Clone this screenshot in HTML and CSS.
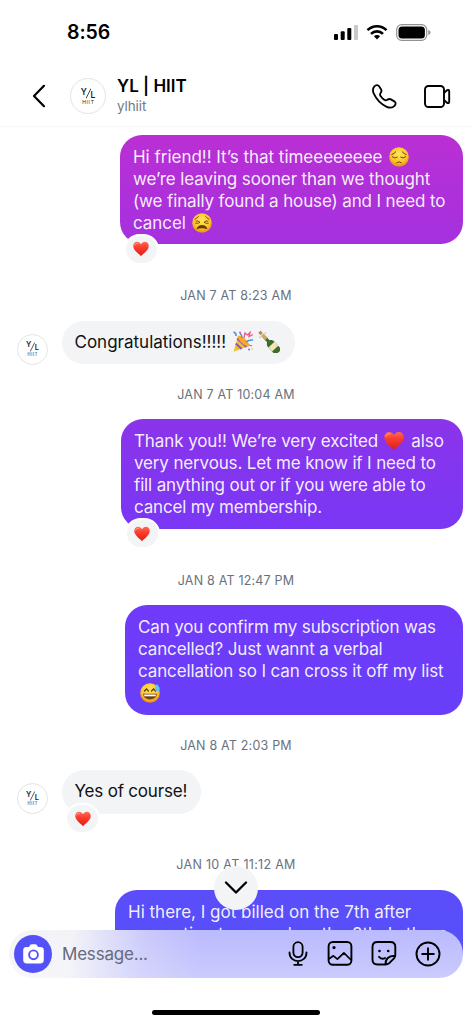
FILE: index.html
```html
<!DOCTYPE html>
<html lang="en">
<head>
<meta charset="utf-8">
<title>YL | HIIT</title>
<link rel="stylesheet" href="styles.css">
</head>
<body>
<svg class="defs" width="0" height="0" aria-hidden="true">
  <defs>
    <radialGradient id="face" cx=".5" cy=".35" r=".65"><stop offset="0" stop-color="#ffe65c"/><stop offset=".65" stop-color="#fcc52b"/><stop offset="1" stop-color="#e98a12"/></radialGradient>
    <linearGradient id="red" x1="0" y1="0" x2="0" y2="1"><stop offset="0" stop-color="#ff6a55"/><stop offset=".4" stop-color="#fb3c2d"/><stop offset="1" stop-color="#dc1e18"/></linearGradient>
    <symbol id="heart" viewBox="0 0 20 20"><path fill="url(#red)" d="M10 19C8.7 16.8.3 12 .3 6.2.3 3.1 2.4 1 5 1c2.200 0 4 1.100 5 3.100C11 2.100 12.800 1 15 1c2.600 0 4.700 2.100 4.700 5.200C19.700 12 11.300 16.800 10 19z"/><path d="M2 5.200C2.500 3.200 4.300 2.400 6 2.900" fill="none" stroke="#ffa694" stroke-width="1" stroke-linecap="round"/></symbol>
  </defs>
</svg>
<div class="phone">
  <div class="status">
    <span class="clock">8:56</span>
    <span class="indicators">
      <svg width="24" height="16" viewBox="0 0 24 16"><rect x="0" y="10" width="4" height="6" rx="1"/><rect x="6.700" y="7.300" width="4" height="8.700" rx="1"/><rect x="13.300" y="4" width="4" height="12" rx="1"/><rect x="20" y="1" width="4" height="15" rx="1" fill="#c8c8c8"/></svg>
      <svg width="22" height="16" viewBox="0 0 22 16" fill="none" stroke="#000" stroke-width="2.600"><path d="M1.500 6.200a13.500 13.500 0 0 1 19 0"/><path d="M5 9.900a8.500 8.500 0 0 1 12 0"/><path d="M7.900 12.300a4.400 4.400 0 0 1 6.200 0L11 15.600z" fill="#000" stroke="none"/></svg>
      <svg width="35" height="17" viewBox="0 0 35 17"><rect x=".7" y=".7" width="30" height="15.600" rx="5" fill="none" stroke="#929292" stroke-width="1.200"/><rect x="2.500" y="2.500" width="26.400" height="12" rx="3.500"/><path d="M32.300 5.700q2.200 1 2.200 2.800t-2.200 2.800z" fill="#929292"/></svg>
    </span>
  </div>
  <header class="header">
    <svg class="back" width="14" height="24" viewBox="0 0 14 24" fill="none" stroke="#000" stroke-width="2.200" stroke-linecap="round" stroke-linejoin="round"><path d="M12 1.800 2 12l10 10.200"/></svg>
    <div class="avatar avatar-lg"><span class="mono"><b>Y</b><svg width="5" height="11" viewBox="0 0 5 11"><path d="M5 .5 0 10.500" stroke="#333" stroke-width=".9"/></svg><b class="low">L</b></span><span class="sub">HIIT</span></div>
    <div class="who"><div class="name">YL | HIIT</div><div class="handle">ylhiit</div></div>
    <svg class="call" width="25" height="25" viewBox="0 0 25 25" fill="none" stroke="#000" stroke-width="1.800" stroke-linejoin="round"><path d="M2.400 2.400C4 .7 6 .7 7.100 2.300l2 3.200c.8 1.400.5 2.300-.5 3.500-.9 1.100-.8 2 0 3.100 1 1.500 2.200 2.700 3.600 3.700 1.200.9 2 .8 3.100 0 1.200-.9 2.100-1.200 3.600-.4l3.400 2c1.800 1.100 1.700 2.900.2 4.500-1.800 2-4.800 2.200-7.800.9C9.300 20.400 4.300 15.200 1.800 9.700.6 7 .7 4.300 2.400 2.400z"/></svg>
    <svg class="video" width="27" height="23" viewBox="0 0 27 23" fill="none" stroke="#000" stroke-width="1.900" stroke-linejoin="round"><rect x="1" y="1" width="19" height="21" rx="3.500"/><path d="M20 8.200 22.500 5.600Q25.200 3.800 25.200 6.500v10q0 2.700-2.700 .9L20 14.800"/></svg>
  </header>

  <main class="thread">
    <section class="sent s1">
      <p><span class="l a1">Hi friend!! It’s that timeeeeeeee</span><svg class="emo" viewBox="0 0 20 20"><circle cx="10" cy="10" r="9.800" fill="url(#face)"/><path d="M2.800 7.500Q5 7 6.800 4.800M17.200 7.500Q15 7 13.200 4.800M3.300 9.800q2.500 2.300 5 .4M16.700 9.800q-2.500 2.300-5 .4M7.600 15.700q2.400-2 4.800 0" fill="none" stroke="#74400b" stroke-width="1" stroke-linecap="round"/></svg></p>
      <p><span class="l a2">we’re leaving sooner than we thought</span></p>
      <p><span class="l a3">(we finally found a house) and I need to</span></p>
      <p><span class="l a4">cancel</span><svg class="emo" viewBox="0 0 20 20"><circle cx="10" cy="10" r="9.800" fill="url(#face)"/><path d="M3 6.200Q5 5.200 6.500 3.400M17 6.200Q15 5.200 13.500 3.400M4 8q2.300-.5 4 1.300-2 1.500-4.300 1M16 8q-2.300-.5-4 1.300 2 1.500 4.300 1" fill="none" stroke="#74400b" stroke-width=".9" stroke-linecap="round"/><path d="M4.700 16.300C5.500 10.700 14.500 10.700 15.300 16.300Q10 14 4.700 16.300z" fill="#6b3a10"/></svg></p>
      <span class="react"><svg viewBox="0 0 20 20"><use href="#heart"/></svg></span>
    </section>
    <time class="t1">JAN 7 AT 8:23 AM</time>
    <section class="received">
      <div class="avatar"><span class="mono"><b>Y</b><svg width="5" height="10" viewBox="0 0 5 11"><path d="M5 .5 0 10.500" stroke="#333" stroke-width=".9"/></svg><b class="low">L</b></span><span class="sub">HIIT</span></div>
      <div class="bubble r1"><span class="l b1">Congratulations!!!!!</span>
        <svg class="party" viewBox="0 0 22 22"><path d="M6 5 17 15 1.500 20.700z" fill="#f8bd28"/><path d="M5.200 7.500 14.500 16M3.800 12.500 9.600 18" stroke="#8a55cf" stroke-width="2"/><ellipse cx="11.500" cy="10" rx="2.700" ry="7.500" transform="rotate(-47 11.500 10)" fill="#f7a928"/><path d="M1.500 1q3 1 2.500 4M10 7q0-3-2-5M14 11q3-2.500 7-2" fill="none" stroke="#4b8eeb" stroke-width="1.500"/><path d="m12 7 1-5 2.500 2L18 1.500l-1 4 4-2M17 14l3 1" fill="none" stroke="#f25783" stroke-width="1.300"/><circle cx="8" cy="1.500" r="1" fill="#f25783"/><circle cx="17" cy="18.500" r="1" fill="#8a62dc"/><circle cx="20" cy="18" r=".8" fill="#f8bd28"/></svg>
        <svg class="bottle" viewBox="0 0 22 22"><g transform="rotate(-43 11 11)"><path d="M9.400 4h3.200v6c2 1.200 2.600 2.500 2.600 4.500v9q0 1.500-1.500 1.500H8.300q-1.500 0-1.500-1.500v-9c0-2 .6-3.300 2.600-4.500z" fill="#3f6b2d"/><path d="M9.200 1h3.600v6H9.200z" fill="#c9aa62"/><path d="M9.400-3h3.200v3.200H9.400z" fill="#b58b5a"/><path d="M6.800 14.500h8.400v5.500H6.800z" fill="#efe5b6"/></g><path d="M1 5.500 3 7M6.500 1.500 8 3" stroke="#d9cdb0" stroke-width="1.500"/></svg>
      </div>
    </section>
    <time class="t2">JAN 7 AT 10:04 AM</time>
    <section class="sent s2">
      <p><span class="l c1">Thank you!! We’re very excited</span><svg class="emo" viewBox="0 0 20 20"><use href="#heart"/></svg><span class="l c1b">also</span></p>
      <p><span class="l c2">very nervous. Let me know if I need to</span></p>
      <p><span class="l c3">fill anything out or if you were able to</span></p>
      <p><span class="l c4">cancel my membership.</span></p>
      <span class="react"><svg viewBox="0 0 20 20"><use href="#heart"/></svg></span>
    </section>
    <time class="t3">JAN 8 AT 12:47 PM</time>
    <section class="sent s3">
      <p><span class="l d1">Can you confirm my subscription was</span></p>
      <p><span class="l d2">cancelled? Just wannt a verbal</span></p>
      <p><span class="l d3">cancellation so I can cross it off my list</span></p>
      <p><svg class="emo first" viewBox="0 0 20 20"><circle cx="10" cy="10" r="9.800" fill="url(#face)"/><path d="m4.500 8 2-2 2 2M11.500 8l2-2 2 2" fill="none" stroke="#653a10" stroke-width="1.300" stroke-linecap="round"/><path d="M3.200 10.800h13.600c0 7.500-13.600 7.500-13.600 0z" fill="#74400f"/><path d="M4.200 11.500h11.600v1.800H4.200z" fill="#fff"/><path d="M17 .8c1.500 2.200 2.700 3.500 2.700 5.200 0 3-4.700 3-4.700 0 0-1.700 1.200-3 2-5.200z" fill="#5ec5f4"/></svg></p>
    </section>
    <time class="t4">JAN 8 AT 2:03 PM</time>
    <section class="received">
      <div class="avatar"><span class="mono"><b>Y</b><svg width="5" height="10" viewBox="0 0 5 11"><path d="M5 .5 0 10.500" stroke="#333" stroke-width=".9"/></svg><b class="low">L</b></span><span class="sub">HIIT</span></div>
      <div class="bubble r2"><span class="l e1">Yes of course!</span><span class="react"><svg viewBox="0 0 20 20"><use href="#heart"/></svg></span></div>
    </section>
    <time class="t5">JAN 10 AT 11:12 AM</time>
    <section class="sent s4">
      <p><span class="l f1">Hi there, I got billed on the 7th after</span></p>
      <p><span class="l f2">requesting to cancel on the 8th. Is there</span></p>
    </section>
  </main>

  <div class="down"><svg width="24" height="14" viewBox="0 0 24 14" fill="none" stroke="#000" stroke-width="2.300" stroke-linecap="round" stroke-linejoin="round"><path d="m2 1.500 10 10 10-10"/></svg></div>
  <footer class="composer">
    <div class="camera"><svg width="21" height="20" viewBox="0 0 21 20"><path fill="#fff" d="M6.800 1.500Q7.500.2 9 .2h3q1.500 0 2.200 1.300l.5 1q.3.500 1 .5h1.500Q20.800 3 20.800 6.300v9.400q0 3.800-3.600 3.800H3.800Q.2 19.500.2 15.700V6.300Q.2 3 3.800 3h1.500q.7 0 1-.5z"/><circle cx="10.500" cy="10.800" r="4.400" fill="none" stroke="#5551f8" stroke-width="1.900"/></svg></div>
    <span class="placeholder">Message...</span>
    <svg class="mic" width="20" height="25" viewBox="0 0 20 25" fill="none" stroke="#000" stroke-width="1.800" stroke-linecap="round"><rect x="5.400" y="1.200" width="9.200" height="15" rx="4.600"/><path d="M1.500 11.500c0 11.400 17 11.400 17 0M10 20.200v3.500M6.200 23.800h7.600"/></svg>
    <svg class="pic" width="26" height="25" viewBox="0 0 26 25" fill="none" stroke="#000" stroke-width="1.900" stroke-linejoin="round"><rect x="1.600" y="1" width="22.800" height="22.800" rx="4.200"/><path d="m1.800 18 4.600-3.200 4 3.300 6.500-6.300 7.200 7.200" stroke-width="1.700"/><circle cx="7" cy="6.600" r="1.600" fill="#000" stroke="none"/></svg>
    <svg class="sticker" width="26" height="25" viewBox="0 0 26 25" fill="none" stroke="#000" stroke-width="1.900" stroke-linejoin="round" stroke-linecap="round"><path d="M14.500 23.500H6.500q-5 0-5-5V6q0-5 5-5h12.800q5 0 5 5v8q0 2-1.300 3.300l-5 5q-1.400 1.200-3.500 1.200zM14.500 23.500c-.2-5.500 3-9 9.500-8.800M8 15.800q3 3 6 1.200"/><circle cx="8.500" cy="10" r="1.300" fill="#000" stroke="none"/><circle cx="17.200" cy="10" r="1.300" fill="#000" stroke="none"/></svg>
    <svg class="plus" width="26" height="26" viewBox="0 0 26 26" fill="none" stroke="#000" stroke-width="1.900" stroke-linecap="round"><circle cx="13" cy="13" r="11.500"/><path d="M13 7.200v11.600M7.200 13h11.600"/></svg>
  </footer>
  <div class="home"></div>
</div>
</body>
</html>
```
FILE: styles.css
```css
* { box-sizing: border-box; }
body { margin: 0; background: #fff; font-family: Inter, "Liberation Sans", sans-serif; color: #101114; }
p { margin: 0; }
svg { display: block; flex: none; }
.defs { position: absolute; }
.phone { position: relative; width: 472px; height: 1024px; overflow: hidden; display: flex; flex-direction: column; }
.status { height: 64px; flex: none; display: flex; align-items: center; justify-content: space-between; padding: 0 42px 0 67px; }
.clock { font-size: 19.500px; font-weight: 600; letter-spacing: -.1px; color: #000; }
.indicators { display: flex; align-items: center; gap: 8px; padding-right: -1px; margin-right: -1px; }
.header { height: 63px; flex: none; display: flex; align-items: center; border-bottom: 1px solid #f7f7f8; padding: 2px 0 0 32px; }
.back { margin-right: 24px; }
.avatar { width: 31px; height: 31px; flex: none; border: 1px solid #e3e4e6; border-radius: 50%; background: #fff; display: flex; flex-direction: column; align-items: center; justify-content: center; gap: 1px; color: #222; }
.mono { display: flex; align-items: center; height: 10px; font-size: 7.500px; line-height: 8px; }
.mono svg { margin: 0 -.5px 0 -1px; }
.mono b { font-weight: 600; margin-top: -3px; }
.mono b.low { margin-top: 3px; }
.sub { font-size: 4.200px; line-height: 4px; letter-spacing: .7px; margin-right: -.7px; }
.avatar-lg { width: 36px; height: 36px; }
.avatar-lg .mono { font-size: 8.500px; height: 11px; }
.avatar-lg .sub { font-size: 5px; line-height: 5px; }
.who { margin-left: 11px; width: 255px; }
.name { font-size: 17px; line-height: 20px; font-weight: 600; color: #000; }
.handle { font-size: 13.500px; line-height: 20px; color: #727a85; letter-spacing: -.1px; }
.video { margin-left: 27px; }
.thread { height: 827px; flex: none; overflow: hidden; padding: 8px 9px 0 17px; display: flex; flex-direction: column; }
.sent { position: relative; align-self: flex-end; flex: none; height: 109.500px; border-radius: 22px; padding: 11px 13px; color: rgba(255,255,255,.93); }
.sent p { display: flex; align-items: center; height: 22px; }
.l { font-size: 17px; line-height: 22px; white-space: nowrap; flex: none; }
.s1 { width: 343px; height: 109px; background: linear-gradient(#ba2fd4, #a431df); }
.s2 { width: 342px; background: linear-gradient(#8b34ea, #7937f5); }
.s3 { width: 338px; background: linear-gradient(#703afa, #683ff9); }
.s4 { width: 348px; background: linear-gradient(#5c4dfa, #4f52fb); }
.a1 { letter-spacing: -.02px; }
.a2 { letter-spacing: -.11px; }
.a3, .d2, .d3 { letter-spacing: -.13px; }
.a4 { letter-spacing: -.05px; }
.c1 { letter-spacing: -.1px; }
.c2, .c3, .d1 { letter-spacing: -.15px; }
.c4, .e1 { letter-spacing: -.19px; }
.emo { width: 20px; height: 20px; margin: -1px 7px 0 6px; }
.emo.first { margin-left: 2px; }
.react { position: absolute; left: 3.500px; top: 98.800px; width: 35px; height: 31px; border: 2px solid #fff; border-radius: 16px; background: #f3f4f6; display: flex; align-items: center; justify-content: center; }
.react svg { width: 16px; height: 16px; }
time { flex: none; align-self: center; height: 18px; line-height: 18px; font-size: 12.500px; letter-spacing: .2px; color: #6a717c; white-space: nowrap; }
.thread time { margin-right: 8px; }
.t1 { margin: 42.500px 0 16.500px; }
.t2 { margin: 22px 0 15.300px; }
.t3 { margin: 43.200px 0 15.300px; }
.t4 { margin: 22.500px 0 15px; }
.t5 { margin: 42.500px 0 15.700px; }
.thread .t5 { letter-spacing: .3px; }
.received { flex: none; display: flex; align-items: flex-end; gap: 13.500px; }
.received .avatar { margin-bottom: -.7px; }
.bubble { position: relative; height: 43.500px; border-radius: 22px; background: #f3f4f6; padding: 9px 13px 10px; display: flex; align-items: center; }
.r1 { width: 233.500px; height: 43px; }
.r2 { width: 139.500px; padding-bottom: 11px; }
.r2 .react { top: 33px; }
.party { width: 22px; height: 22px; margin-left: 6px; }
.bottle { width: 22px; height: 22px; margin-left: 4px; }
.down { position: absolute; left: 214px; top: 866px; width: 44px; height: 44px; border-radius: 50%; background: #f3f4f6; display: flex; align-items: center; justify-content: center; }
.composer { position: absolute; left: 9px; top: 929.500px; width: 454px; height: 48px; border-radius: 24px; background: linear-gradient(rgba(255,255,255,0), rgba(255,255,255,.25)), linear-gradient(100deg, #f5f5f7 0, #f2f2f8 14%, #c9c8fb 30%, #babafe 42%, #babafe 100%); display: flex; align-items: center; padding: 0 22px 0 5px; }
.camera { width: 38px; height: 38px; border-radius: 50%; background: #5551f8; display: flex; align-items: center; justify-content: center; }
.placeholder { font-size: 17px; letter-spacing: -.2px; color: #656b7c; margin-left: 10px; width: 218px; }
.mic { margin-left: 8px; }
.pic { margin-left: 19px; }
.sticker, .plus { margin-left: 18px; }
.home { position: absolute; left: 152px; top: 1010px; width: 168px; height: 5px; border-radius: 3px; background: #000; }
```
